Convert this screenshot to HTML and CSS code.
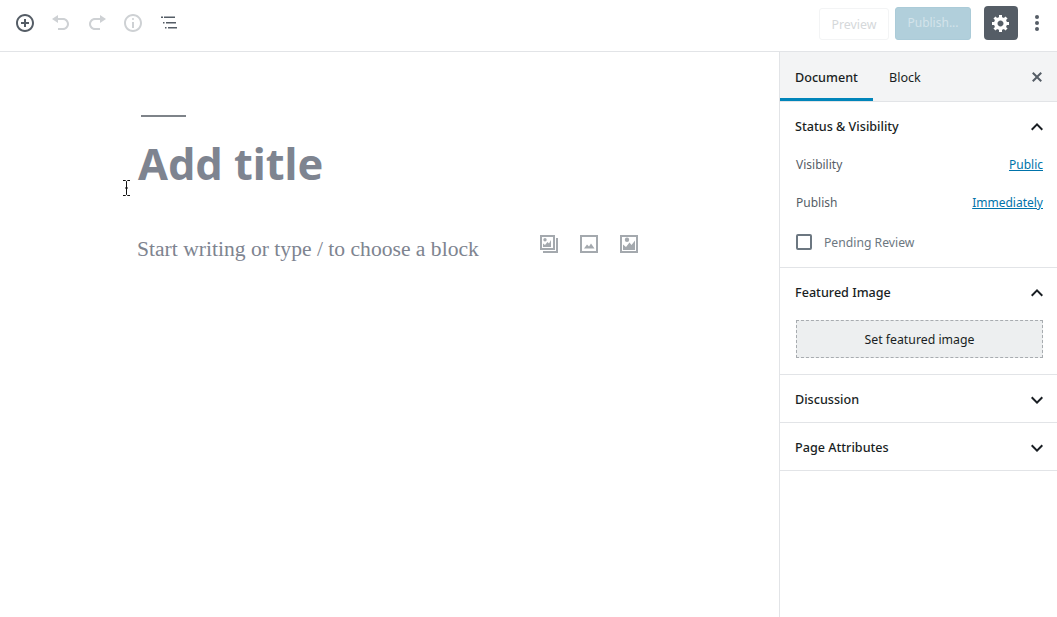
FILE: index.html
```html
<!DOCTYPE html>
<html lang="en">
<head>
    <meta charset="UTF-8">
    <meta name="viewport" content="width=device-width, initial-scale=1.0">
    <title>Add New Post</title>
    <link rel="stylesheet" href="styles.css">
</head>
<body>
    <header class="toolbar">
        <div class="toolbar-left">
            <svg class="tool-icon dark" viewBox="0 0 20 20"><path d="M10 1c-5 0-9 4-9 9s4 9 9 9 9-4 9-9-4-9-9-9zm0 16c-3.900 0-7-3.100-7-7s3.100-7 7-7 7 3.100 7 7-3.100 7-7 7zm1-11H9v3H6v2h3v3h2v-3h3V9h-3V6z"/></svg>
            <svg class="tool-icon" viewBox="0 0 20 20"><path d="M12 5H7V2L1 6l6 4V7h5c2.200 0 4 1.800 4 4s-1.800 4-4 4H7v2h5c3.300 0 6-2.700 6-6s-2.700-6-6-6z"/></svg>
            <svg class="tool-icon" viewBox="0 0 20 20"><path d="M8 5h5V2l6 4-6 4V7H8c-2.200 0-4 1.800-4 4s1.800 4 4 4h5v2H8c-3.300 0-6-2.700-6-6s2.700-6 6-6z"/></svg>
            <svg class="tool-icon" viewBox="0 0 20 20"><path d="M9 15h2V9H9v6zm1-10c-.5 0-1 .5-1 1s.5 1 1 1 1-.5 1-1-.5-1-1-1zm0-4c-5 0-9 4-9 9s4 9 9 9 9-4 9-9-4-9-9-9zm0 16c-3.900 0-7-3.100-7-7s3.100-7 7-7 7 3.100 7 7-3.100 7-7 7z"/></svg>
            <svg class="tool-icon dark" viewBox="0 0 20 20"><path d="M2 3.500h2v1.500H2V3.500zm3 0h11v1.500H5V3.500zM4 9h1.500v1.500H4V9zm3 0h10v1.500H7V9zm-1 5h1.500v1.500H6V14zm3 0h9v1.500H9V14z"/></svg>
        </div>
        <div class="toolbar-right">
            <button class="btn-preview">Preview</button>
            <button class="btn-publish">Publish...</button>
            <button class="btn-settings">
                <svg viewBox="0 0 20 20"><path d="M18 12h-2.180c-.17.7-.44 1.350-.81 1.930l1.540 1.540-2.100 2.100-1.540-1.540c-.58.36-1.230.63-1.910.79V19H8v-2.180c-.68-.16-1.330-.43-1.910-.79l-1.540 1.540-2.120-2.120 1.540-1.540c-.36-.58-.63-1.230-.79-1.910H1V9.030h2.170c.16-.7.44-1.350.8-1.940L2.430 5.550l2.100-2.100 1.540 1.540c.58-.37 1.240-.64 1.930-.81V2h3v2.180c.68.16 1.330.43 1.910.79l1.540-1.540 2.120 2.120-1.540 1.540c.36.59.64 1.240.8 1.940H18V12zm-8.500 1.500c1.660 0 3-1.340 3-3s-1.340-3-3-3-3 1.340-3 3 1.340 3 3 3z"/></svg>
            </button>
            <svg class="more-icon" viewBox="0 0 6 20"><circle cx="3" cy="4" r="2"/><circle cx="3" cy="10" r="2"/><circle cx="3" cy="16" r="2"/></svg>
        </div>
    </header>

    <div class="layout">
        <main class="editor">
            <div class="title-rule"></div>
            <h1 class="post-title">Add title</h1>
            <div class="block-row">
                <p class="placeholder">Start writing or type / to choose a block</p>
                <div class="block-icons">
                    <svg viewBox="0 0 20 20"><path fill-rule="evenodd" d="M1 1h15v15H1V1zm2 2v11h11V3H3zM17 4h2v15H4v-2h13V4zM4 13V9.500l2 1.500 2.500-3 1.500 1.500 2-3.500V13H4zM6 4a1.700 1.700 0 1 1 0 3.400A1.700 1.700 0 0 1 6 4z"/></svg>
                    <svg viewBox="0 0 20 20"><path fill-rule="evenodd" d="M1 1h18v18H1V1zm2 2v14h14V3H3zM5 14.500l3-4 2 2 2-3 3.500 5H5z"/></svg>
                    <svg viewBox="0 0 20 20"><path fill-rule="evenodd" d="M1 1h18v18H1V1zm2 2v14h14V3H3zM4 16v-5.500l3 2.500 3.500-4.500 2 2.500L16 6.500V16H4zM8 3.500a2.200 2.200 0 1 1 0 4.400 2.200 2.200 0 0 1 0-4.400z"/></svg>
                </div>
            </div>
        </main>

        <aside class="sidebar">
            <div class="tabs">
                <div class="tab active">Document</div>
                <div class="tab">Block</div>
                <svg class="close-icon" viewBox="0 0 20 20"><path d="M14.950 6.460L11.410 10l3.540 3.540-1.410 1.410L10 11.420l-3.530 3.530-1.420-1.420L8.580 10 5.050 6.470l1.420-1.420L10 8.580l3.540-3.530z"/></svg>
            </div>

            <section class="panel">
                <div class="panel-head">
                    <span>Status &amp; Visibility</span>
                    <svg class="chevron" viewBox="0 0 24 24"><path d="M12 8l-6 6 1.410 1.410L12 10.830l4.590 4.580L18 14z"/></svg>
                </div>
                <div class="panel-row first"><span>Visibility</span><a href="#">Public</a></div>
                <div class="panel-row"><span>Publish</span><a href="#">Immediately</a></div>
                <label class="pending"><span class="checkbox"></span>Pending Review</label>
            </section>

            <section class="panel">
                <div class="panel-head">
                    <span>Featured Image</span>
                    <svg class="chevron" viewBox="0 0 24 24"><path d="M12 8l-6 6 1.410 1.410L12 10.830l4.590 4.580L18 14z"/></svg>
                </div>
                <button class="featured-btn">Set featured image</button>
            </section>

            <section class="panel">
                <div class="panel-head">
                    <span>Discussion</span>
                    <svg class="chevron" viewBox="0 0 24 24"><path d="M16.590 8.590L12 13.170 7.410 8.590 6 10l6 6 6-6z"/></svg>
                </div>
            </section>

            <section class="panel">
                <div class="panel-head">
                    <span>Page Attributes</span>
                    <svg class="chevron" viewBox="0 0 24 24"><path d="M16.590 8.590L12 13.170 7.410 8.590 6 10l6 6 6-6z"/></svg>
                </div>
            </section>
        </aside>
    </div>

    <!-- text cursor caught in the screenshot -->
    <svg class="mouse-cursor" viewBox="0 0 9 16"><path d="M1 .5h2.500l1 1 1-1H8M4.500 1.500v13M1 15.500h2.500l1-1 1 1H8M3 8h3" fill="none" stroke="#111" stroke-width="1"/></svg>
</body>
</html>
```

FILE: styles.css
```css
* {
    box-sizing: border-box;
}
html, body {
    height: 100%;
}
body {
    margin: 0;
    display: flex;
    flex-direction: column;
    overflow: hidden;
    background-color: #ffffff;
    font-family: 'Noto Sans', sans-serif;
    font-size: 12.6px;
    color: #191e23;
}
button {
    font-family: inherit;
}

/* top bar */
.toolbar {
    display: flex;
    justify-content: space-between;
    align-items: center;
    flex: none;
    height: 52px;
    padding: 0 16px 5px 15px;
    border-bottom: 1px solid #e2e4e7;
}
.toolbar-left {
    display: flex;
    align-items: center;
    gap: 16px;
}
.tool-icon {
    width: 20px;
    height: 20px;
    fill: #ced1d4;
}
.tool-icon.dark {
    fill: #555d66;
}
.toolbar-right {
    display: flex;
    align-items: center;
    margin-right: 1px;
}
.btn-preview {
    width: 70px;
    height: 32px;
    margin: 2px 6px 0 0;
    background-color: #ffffff;
    border: 1px solid #f3f4f5;
    border-radius: 3px;
    color: #d5d8da;
    font-size: 12.4px;
}
.btn-publish {
    width: 76px;
    height: 33px;
    margin-right: 13px;
    padding-bottom: 3px;
    background-color: #b1cfdb;
    border: 1px solid #abcbd8;
    border-radius: 3px;
    color: #d3e3ea;
    font-size: 12px;
}
.btn-settings {
    display: flex;
    align-items: center;
    justify-content: center;
    width: 34px;
    height: 34px;
    margin-right: 16px;
    padding: 0;
    background-color: #555d66;
    border: none;
    border-radius: 4px;
}
.btn-settings svg {
    width: 20px;
    height: 20px;
    fill: #ffffff;
}
.more-icon {
    width: 6px;
    height: 20px;
    fill: #555d66;
}

/* main area */
.layout {
    display: flex;
    flex: 1;
    min-height: 0;
}
.editor {
    flex: 1;
    padding: 63px 140px 0 137px;
}
.title-rule {
    width: 45px;
    height: 2px;
    margin-left: 4px;
    background-color: #7e8389;
}
.post-title {
    margin: 17px 0 0 1px;
    font-size: 43.3px;
    line-height: 60px;
    font-weight: 700;
    color: #7e8490;
}
.block-row {
    display: flex;
    justify-content: space-between;
    align-items: center;
    margin-top: 32px;
}
.placeholder {
    margin: 7px 0 0;
    font-family: 'Liberation Serif', serif;
    font-size: 21.6px;
    line-height: 32px;
    color: #7e8490;
}
.block-icons {
    display: flex;
    gap: 20px;
    margin: 0 0 3px 0;
}
.block-icons svg {
    width: 20px;
    height: 20px;
    fill: #a4a9ae;
}

/* right column */
.sidebar {
    flex: none;
    width: 278px;
    border-left: 1px solid #e2e4e7;
}
.tabs {
    display: flex;
    align-items: center;
    height: 50px;
    padding-right: 10px;
    background-color: #f3f4f5;
    border-bottom: 1px solid #e2e4e7;
}
.tab {
    height: 49px;
    padding: 0 15px;
    line-height: 52px;
}
.tab.active {
    width: 93px;
    font-weight: 500;
    border-bottom: 3px solid #0085ba;
}
.tab + .tab {
    padding-left: 16px;
}
.close-icon {
    width: 20px;
    height: 20px;
    margin-left: auto;
    fill: #555d66;
}
.panel {
    padding: 0 14px 0 16px;
    border-bottom: 1px solid #e2e4e7;
}
.panel-head {
    display: flex;
    justify-content: space-between;
    align-items: center;
    height: 47px;
    padding-top: 2px;
    margin-left: -1px;
    font-weight: 500;
}
.chevron {
    width: 24px;
    height: 24px;
    margin-right: -6px;
    fill: #191e23;
}
.panel-row {
    display: flex;
    justify-content: space-between;
    height: 38px;
    line-height: 28px;
    font-size: 12px;
    color: #555d66;
}
.panel-row.first {
    margin-top: 2px;
}
.panel-row a {
    color: #0073aa;
}
.pending {
    display: flex;
    align-items: center;
    height: 40px;
    padding-bottom: 10px;
    font-size: 12.2px;
    color: #6c7781;
}
.checkbox {
    width: 16px;
    height: 16px;
    margin-right: 12px;
    border: 2px solid #6c7781;
    border-radius: 2px;
}
.featured-btn {
    display: block;
    width: 247px;
    height: 38px;
    margin: 5px 0 16px;
    background-color: #edeff0;
    border: 1px dashed #a8acb0;
    color: #191e23;
    font-size: 12.3px;
}
.mouse-cursor {
    position: absolute;
    left: 122px;
    top: 180px;
    width: 9px;
    height: 16px;
}
```
